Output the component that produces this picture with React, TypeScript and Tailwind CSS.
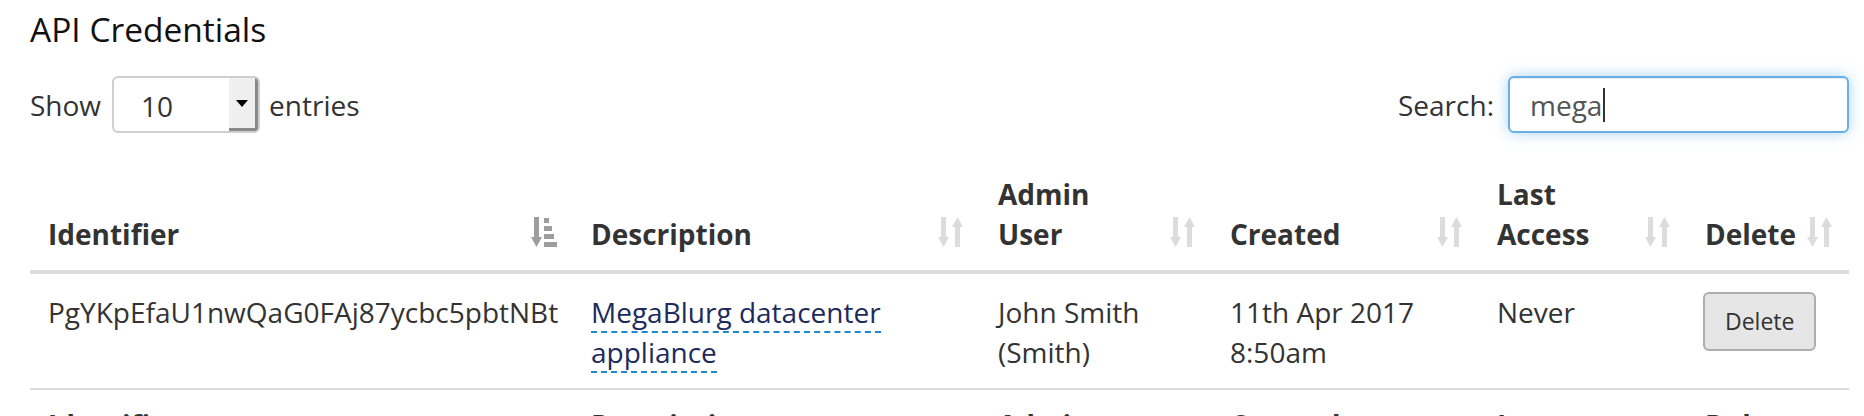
import React from "react";

type Column = { key: string; label: React.ReactNode; width: string; active?: boolean };

const columns: Column[] = [
  { key: "id", label: "Identifier", width: "w-[543px]", active: true },
  { key: "desc", label: "Description", width: "w-[407px]" },
  { key: "admin", label: <>Admin<br />User</>, width: "w-[232px]" },
  { key: "created", label: "Created", width: "w-[267px]" },
  { key: "last", label: <>Last<br />Access</>, width: "w-[208px]" },
  { key: "delete", label: "Delete", width: "w-[162px]" },
];

function SortIcon({ active }: { active?: boolean }) {
  const fill = active ? "#9d9d9d" : "#dcdcdc";
  return (
    <svg width="26" height="30" viewBox="0 0 26 30" className="block">
      <rect x="3" y="0" width="5" height="22" fill={fill} />
      <polygon points="0,20 11,20 5.5,30" fill={fill} />
      {active ? (
        <>
          <rect x="13" y="1" width="5" height="5" fill={fill} />
          <rect x="13" y="9" width="8" height="5" fill={fill} />
          <rect x="13" y="17" width="10" height="5" fill={fill} />
          <rect x="13" y="25" width="13" height="5" fill={fill} />
        </>
      ) : (
        <>
          <polygon points="14,10 25,10 19.5,0" fill={fill} />
          <rect x="17" y="8" width="5" height="22" fill={fill} />
        </>
      )}
    </svg>
  );
}

function HeaderCells({ foot }: { foot?: boolean }) {
  return (
    <tr>
      {columns.map((c) => (
        <th
          key={c.key}
          className={`relative text-left font-bold pl-[18px] pr-[44px] ${
            foot
              ? "align-top pt-[15px] pb-[16px]"
              : "align-bottom pt-[14px] pb-[16px] border-b-4 border-[#dddddd]"
          }`}
        >
          {c.label}
          {!foot && (
            <span className="absolute right-[16px] bottom-[23px]">
              <SortIcon active={c.active} />
            </span>
          )}
        </th>
      ))}
    </tr>
  );
}

export default function App() {
  return (
    <div className="min-h-[416px] bg-white pl-[30px] pr-[15px] font-['Open_Sans',sans-serif] text-[28px] leading-[40px] text-[#333333]">
      <h3 className="pt-[11px] text-[33.5px] leading-[36px] font-normal text-[#111111]">API Credentials</h3>

      <div className="mt-[29px] flex h-[57px] items-center justify-between">
        <label className="flex items-center">
          <span>Show</span>
          <div className="ml-[11px] mr-[9px] flex h-[57px] w-[148px] overflow-hidden rounded-[6px] border-2 border-[#cfcfcf] bg-white">
            <span className="flex-1 pl-[27px] pt-[8px] text-[#333]">10</span>
            <span className="flex w-[29px] items-center justify-center border-r-[3px] border-b-[3px] border-[#8a8a8a] bg-[#efefef]">
              <span className="h-0 w-0 border-x-[6px] border-t-[7px] border-x-transparent border-t-black" />
            </span>
          </div>
          <span>entries</span>
        </label>

        <label className="flex items-center">
          <span className="mr-[14px]">Search:</span>
          <div className="flex h-[57px] w-[341px] items-center rounded-[6px] border-2 border-[#66afe9] bg-white pl-[20px] text-[#555] shadow-[0_0_14px_rgba(102,175,233,0.55),inset_0_1px_1px_rgba(0,0,0,0.075)]">
            <span>mega</span>
            <span className="ml-[1px] h-[34px] w-[2px] bg-[#333]" />
          </div>
        </label>
      </div>

      <table className="mt-[27px] w-[1819px] table-fixed border-collapse">
        <colgroup>
          {columns.map((c) => (
            <col key={c.key} className={c.width} />
          ))}
        </colgroup>
        <thead>
          <HeaderCells />
        </thead>
        <tbody>
          <tr className="border-b-2 border-[#dddddd]">
            <td className="px-[18px] pt-[18px] pb-[16px] align-top">PgYKpEfaU1nwQaG0FAj87ycbc5pbtNBt</td>
            <td className="px-[18px] pt-[18px] pb-[16px] align-top">
              <a href="#" className="border-b-2 border-dashed border-[#1b8ad3] text-[#1c2b5c]">
                MegaBlurg datacenter appliance
              </a>
            </td>
            <td className="px-[18px] pt-[18px] pb-[16px] align-top">John Smith (Smith)</td>
            <td className="px-[18px] pt-[18px] pb-[16px] align-top">11th Apr 2017 8:50am</td>
            <td className="px-[18px] pt-[18px] pb-[16px] align-top">Never</td>
            <td className="pl-[16px] pt-[18px] pb-[16px] align-top">
              <button className="h-[59px] rounded-[6px] border-2 border-[#adadad] bg-[#e6e6e6] px-[20px] text-[23px] leading-[35px] text-[#333]">
                Delete
              </button>
            </td>
          </tr>
        </tbody>
        <tfoot>
          <HeaderCells foot />
        </tfoot>
      </table>
    </div>
  );
}
